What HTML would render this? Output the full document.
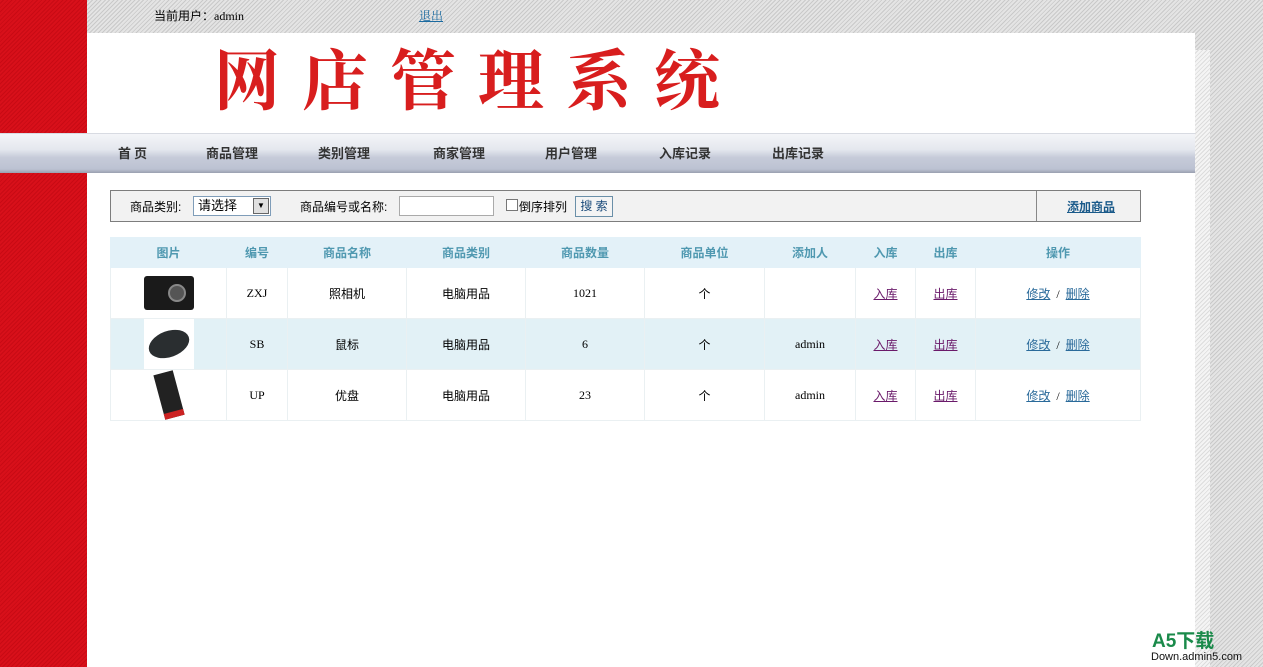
<!DOCTYPE html>
<html><head><meta charset="utf-8"><style>
*{margin:0;padding:0;box-sizing:border-box}
body{width:1263px;height:667px;overflow:hidden;position:relative;font-family:"Liberation Serif","Noto Serif CJK SC",serif;font-size:12px;color:#000;
background:repeating-linear-gradient(135deg,#e4e4e4 0,#e4e4e4 2px,#c9c9c9 2px,#c9c9c9 3px)}
.red{position:absolute;left:0;top:0;width:87px;height:667px;background:repeating-linear-gradient(135deg,#d8101a 0,#d8101a 2px,#c80a14 2px,#c80a14 3px)}
.shadow{position:absolute;left:1195px;top:50px;width:15px;height:617px;background:repeating-linear-gradient(135deg,#f4f4f4 0,#f4f4f4 2px,#dcdcdc 2px,#dcdcdc 3px)}
.panel{position:absolute;left:87px;top:33px;width:1108px;height:634px;background:#fff}
.top{position:absolute;top:7px;font-size:12px}
.title{position:absolute;left:214px;top:36px;font-family:"Noto Serif CJK SC",serif;font-weight:700;font-size:66px;color:#d81e1e;letter-spacing:22px;line-height:80px}
.nav{position:absolute;left:0;top:133px;width:1195px;height:40px;background:linear-gradient(#f4f5f8 0,#e4e7ee 40%,#c6cbd9 60%,#bcc2d2 90%,#9aa0b0 100%);border-top:1px solid #d8dbe2}
.nav span{position:absolute;top:9px;font-family:"Noto Sans CJK SC",sans-serif;font-weight:bold;font-size:13px;color:#333}
.filter{position:absolute;left:110px;top:190px;width:1031px;height:32px;background:#f2f2f2;border:1px solid #7d7d7d;font-family:"Liberation Sans","Noto Sans CJK SC",sans-serif;font-size:12px}
.filter .t{position:absolute;top:7px}
a{color:#1a5a8a}
table{position:absolute;left:110px;top:237px;width:1031px;border-collapse:collapse;border:1px solid #b8d4e0;font-family:"Liberation Serif","Noto Sans CJK SC",serif;font-size:12px}
td,th{border:1px solid #eaf0f2;text-align:center;height:51px;font-weight:normal}
th{height:30px;background:#e3f1f8;color:#4f98b0;font-family:"Noto Sans CJK SC",sans-serif;font-weight:bold;font-size:12px;border-color:#e3f1f8}
tr.b td{background:#e2f1f6}
.in{color:#6a1a6a}
.ed{color:#2a6a9a}
</style></head><body>
<div class="red"></div>
<div class="shadow"></div>
<div class="panel"></div>
<div class="top" style="left:154px;font-family:'Liberation Serif','Noto Sans CJK SC',serif">当前用户：admin</div>
<div class="top" style="left:419px"><a href="#" style="color:#1a6aa0">退出</a></div>
<div class="title">网店管理系统</div>
<div class="nav">
<span style="left:118px">首 页</span><span style="left:206px">商品管理</span><span style="left:318px">类别管理</span><span style="left:433px">商家管理</span><span style="left:545px">用户管理</span><span style="left:659px">入库记录</span><span style="left:772px">出库记录</span>
</div>
<div class="filter">
<span class="t" style="left:19px">商品类别:</span>
<div style="position:absolute;left:82px;top:5px;width:78px;height:20px;border:1px solid #7f9db9;background:#fff;font-size:13px;padding:0 4px;line-height:18px">请选择<span style="position:absolute;right:1px;top:1px;width:16px;height:16px;background:#e0e0e0;border:1px solid #666;font-size:8px;text-align:center;line-height:14px">▼</span></div>
<span class="t" style="left:189px">商品编号或名称:</span>
<div style="position:absolute;left:288px;top:5px;width:95px;height:20px;border:1px solid #aaa;background:#fff"></div>
<div style="position:absolute;left:395px;top:8px;width:12px;height:12px;border:1px solid #777;background:#fff"></div>
<span class="t" style="left:408px">倒序排列</span>
<div style="position:absolute;left:464px;top:5px;width:38px;height:21px;border:1px solid #6a8fa8;background:#f4f4f4;font-size:12px;text-align:center;line-height:19px;color:#1a4a7a">搜 索</div>
<div style="position:absolute;left:925px;top:0;height:30px;border-left:1px solid #888"></div>
<a href="#" class="t" style="left:956px;font-weight:bold;color:#1a5a8a">添加商品</a>
</div>
<table>
<tr><th style="width:116px">图片</th><th style="width:61px">编号</th><th style="width:119px">商品名称</th><th style="width:119px">商品类别</th><th style="width:119px">商品数量</th><th style="width:120px">商品单位</th><th style="width:91px">添加人</th><th style="width:60px">入库</th><th style="width:60px">出库</th><th>操作</th></tr>
<tr><td><div style="margin:auto;width:50px;height:34px;background:#1a1a1a;border-radius:3px;position:relative"><div style="position:absolute;left:24px;top:8px;width:18px;height:18px;border-radius:50%;background:#555;border:2px solid #888"></div></div></td><td>ZXJ</td><td>照相机</td><td>电脑用品</td><td>1021</td><td>个</td><td></td><td><a class="in" href="#">入库</a></td><td><a class="in" href="#">出库</a></td><td><a class="ed" href="#">修改</a> &nbsp;/&nbsp; <a class="ed" href="#">删除</a></td></tr>
<tr class="b"><td><div style="margin:auto;width:50px;height:50px;background:#fff;position:relative"><div style="position:absolute;left:4px;top:12px;width:42px;height:26px;border-radius:50%;background:#2a2e30;transform:rotate(-20deg)"></div></div></td><td>SB</td><td>鼠标</td><td>电脑用品</td><td>6</td><td>个</td><td>admin</td><td><a class="in" href="#">入库</a></td><td><a class="in" href="#">出库</a></td><td><a class="ed" href="#">修改</a> &nbsp;/&nbsp; <a class="ed" href="#">删除</a></td></tr>
<tr><td><div style="margin:auto;width:20px;height:46px;background:#222;transform:rotate(-15deg);border-bottom:6px solid #c22"></div></td><td>UP</td><td>优盘</td><td>电脑用品</td><td>23</td><td>个</td><td>admin</td><td><a class="in" href="#">入库</a></td><td><a class="in" href="#">出库</a></td><td><a class="ed" href="#">修改</a> &nbsp;/&nbsp; <a class="ed" href="#">删除</a></td></tr>
</table>
<div style="position:absolute;left:1152px;top:632px;font-family:'Liberation Sans','Noto Sans CJK SC',sans-serif;font-weight:bold;font-size:19px;color:#1a8a4a;line-height:20px">A5下载</div>
<div style="position:absolute;left:1151px;top:651px;font-family:'Liberation Sans',sans-serif;font-size:11px;color:#111">Down.admin5.com</div>
</body></html>
